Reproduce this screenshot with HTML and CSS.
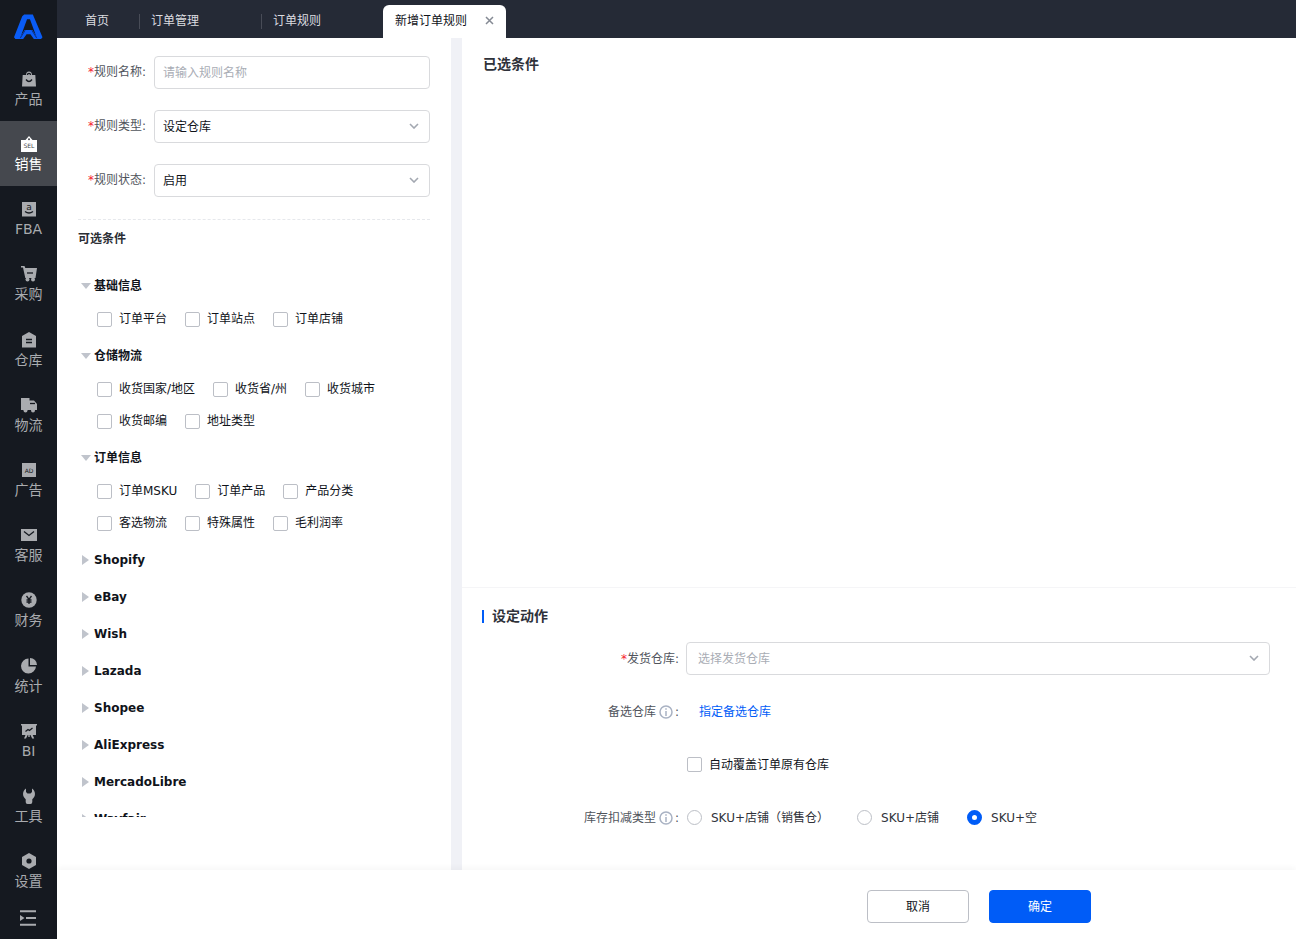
FILE: index.html
```html
<!DOCTYPE html>
<html lang="zh-CN">
<head>
<meta charset="utf-8">
<title>新增订单规则</title>
<link rel="stylesheet" href="styles.css">
</head>
<body>
<div class="app">
  <nav class="sidebar" aria-label="主导航">
    <a class="logo" href="#" aria-label="首页">
      <svg width="30" height="26" viewBox="0 0 30 26"><path d="M10.500 0h9L29.500 23.500 28 25.500h-4L16.500 5h-3L6 25.500H1.500L0 23.500 8.500 2z" fill="#0a5cf5"/><path d="M5 25.500h4.500l3.500-5h4l3.500 5H25l-6-9.500h-8z" fill="#0a5cf5"/><path d="M6.500 24.500L11.500 16.500M23.500 24.500L18.500 16.500" fill="none" stroke="#0b2f83" stroke-width="1"/></svg>
    </a>
    <a class="nav-item" href="#"><svg class="ico" viewBox="0 0 16 16"><path fill="currentColor" d="M5 4a3 3.500 0 0 1 6 0h3.300l.7 11.500H1L1.700 4z"/><path class="cut" d="M6.500 4a1.500 1.700 0 0 1 3 0M5 8.500q3 4 6 0"/></svg>产品</a>
    <a class="nav-item active" href="#" aria-current="page"><svg class="ico" viewBox="0 0 16 16"><path fill="currentColor" d="M0 4h4.500L8 0l3.500 4H16v12H0z"/><circle cx="8" cy="3.200" r="1" class="hole"/><text class="ico-text" x="8" y="12.300">SEL</text></svg>销售</a>
    <a class="nav-item" href="#"><svg class="ico" viewBox="0 0 16 16"><path fill="currentColor" d="M1 1h14v14.500H1z"/><text class="ico-text big" x="8" y="9.300">a</text><path class="cut" d="M4 10.500q4 3 8 0"/></svg>FBA</a>
    <a class="nav-item" href="#"><svg class="ico" viewBox="0 0 16 16"><path fill="currentColor" d="M0 0h3.500l.8 2H16l-1.500 10H4.300L2 1.500H0z"/><circle cx="6.500" cy="13.500" r="2" fill="currentColor"/><circle cx="12" cy="13.500" r="2" fill="currentColor"/><path class="cut" d="M6 7h6"/></svg>采购</a>
    <a class="nav-item" href="#"><svg class="ico" viewBox="0 0 16 16"><path fill="currentColor" d="M8 0l7 4v11.500H1V4z"/><path class="cut" d="M5 7.500h6M5 10.500h6"/></svg>仓库</a>
    <a class="nav-item" href="#"><svg class="ico" viewBox="0 0 16 16"><path fill="currentColor" d="M0 1h8.500v2.500H13L16 7v6H0z"/><path class="cut" d="M9 6.500h5"/><circle cx="4.500" cy="13.500" r="2" fill="currentColor"/><circle cx="12" cy="13.500" r="2" fill="currentColor"/></svg>物流</a>
    <a class="nav-item" href="#"><svg class="ico" viewBox="0 0 16 16"><path fill="currentColor" d="M1 1h14v14H1z"/><text class="ico-text" x="8" y="10.500">AD</text></svg>广告</a>
    <a class="nav-item" href="#"><svg class="ico" viewBox="0 0 16 16"><path fill="currentColor" d="M0 2h16v12H0z"/><path class="cut" d="M3 4.500l5 4 5-4"/></svg>客服</a>
    <a class="nav-item" href="#"><svg class="ico" viewBox="0 0 16 16"><circle cx="8" cy="8" r="7.700" fill="currentColor"/><path class="cut" d="M5.500 4L8 7.500 10.500 4M8 7.500V12M5.500 8h5M5.500 10h5"/></svg>财务</a>
    <a class="nav-item" href="#"><svg class="ico" viewBox="0 0 16 16"><path fill="currentColor" d="M7.500.5v8H15A7.500 7.500 0 1 1 7.500.5z"/><path fill="currentColor" d="M9 0a7 7 0 0 1 7 7H9z"/></svg>统计</a>
    <a class="nav-item" href="#"><svg class="ico" viewBox="0 0 16 16"><path fill="currentColor" d="M0 1h16v1.500h-1V12H1V2.500H0zM4.500 12h2.200L5 15.500H3zM9.500 12h2.200l1.500 3.500h-2zM7.300 12h1.400v2H7.300z"/><path class="cut" d="M4.500 8.500l2.500-2 1.500 1 3-2.500"/></svg>BI</a>
    <a class="nav-item" href="#"><svg class="ico" viewBox="0 0 16 16"><path fill="currentColor" d="M5 .5v3.500l1.500 1.500h3L11 4V.5a6.500 6.500 0 0 1 .3 10.700V14q0 2-1.800 2h-3q-1.800 0-1.800-2v-2.800A6.500 6.500 0 0 1 5 .5z"/></svg>工具</a>
    <a class="nav-item" href="#"><svg class="ico" viewBox="0 0 16 16"><path fill="currentColor" d="M8 0l7 4v8l-7 4-7-4V4z"/><circle class="hole" cx="8" cy="8" r="2.600"/></svg>设置</a>
    <button class="collapse" type="button" aria-label="展开菜单"><svg class="ico" viewBox="0 0 16 16"><path d="M0 1.200h16M6 8h10M0 14.800h16" stroke="currentColor" stroke-width="2"/><path d="M0 5l4.500 3L0 11z" fill="currentColor"/></svg></button>
  </nav>

  <div class="main">
    <header class="tabs">
      <a class="tab home" href="#">首页</a>
      <a class="tab" href="#">订单管理</a>
      <a class="tab" href="#">订单规则</a>
      <div class="tab current"><span>新增订单规则</span><button class="close" type="button" aria-label="关闭"><svg width="9" height="9" viewBox="0 0 9 9"><path d="M1 1l7 7M8 1L1 8" stroke="currentColor" stroke-width="1.500"/></svg></button></div>
    </header>

    <div class="content">
      <section class="rule-panel">
        <div class="fields">
          <div class="field">
            <label for="name"><i>*</i>规则名称:</label>
            <input class="control" id="name" type="text" placeholder="请输入规则名称">
          </div>
          <div class="field">
            <label for="type"><i>*</i>规则类型:</label>
            <div class="select-box"><select class="control" id="type"><option>设定仓库</option></select><svg class="chevron" viewBox="0 0 10 6"><path d="M1 1l4 4 4-4"/></svg></div>
          </div>
          <div class="field">
            <label for="state"><i>*</i>规则状态:</label>
            <div class="select-box"><select class="control" id="state"><option>启用</option></select><svg class="chevron" viewBox="0 0 10 6"><path d="M1 1l4 4 4-4"/></svg></div>
          </div>
        </div>
        <h2 class="sub-title">可选条件</h2>
        <div class="tree">
          <div class="group">
            <button class="group-head open" type="button" aria-expanded="true">基础信息</button>
            <div class="options">
              <label class="check"><input type="checkbox">订单平台</label>
              <label class="check"><input type="checkbox">订单站点</label>
              <label class="check"><input type="checkbox">订单店铺</label>
            </div>
          </div>
          <div class="group">
            <button class="group-head open" type="button" aria-expanded="true">仓储物流</button>
            <div class="options">
              <label class="check"><input type="checkbox">收货国家/地区</label>
              <label class="check"><input type="checkbox">收货省/州</label>
              <label class="check"><input type="checkbox">收货城市</label>
              <label class="check"><input type="checkbox">收货邮编</label>
              <label class="check"><input type="checkbox">地址类型</label>
            </div>
          </div>
          <div class="group">
            <button class="group-head open" type="button" aria-expanded="true">订单信息</button>
            <div class="options">
              <label class="check"><input type="checkbox">订单MSKU</label>
              <label class="check"><input type="checkbox">订单产品</label>
              <label class="check"><input type="checkbox">产品分类</label>
              <label class="check"><input type="checkbox">客选物流</label>
              <label class="check"><input type="checkbox">特殊属性</label>
              <label class="check"><input type="checkbox">毛利润率</label>
            </div>
          </div>
          <div class="group"><button class="group-head" type="button" aria-expanded="false">Shopify</button></div>
          <div class="group"><button class="group-head" type="button" aria-expanded="false">eBay</button></div>
          <div class="group"><button class="group-head" type="button" aria-expanded="false">Wish</button></div>
          <div class="group"><button class="group-head" type="button" aria-expanded="false">Lazada</button></div>
          <div class="group"><button class="group-head" type="button" aria-expanded="false">Shopee</button></div>
          <div class="group"><button class="group-head" type="button" aria-expanded="false">AliExpress</button></div>
          <div class="group"><button class="group-head" type="button" aria-expanded="false">MercadoLibre</button></div>
          <div class="group"><button class="group-head" type="button" aria-expanded="false">Wayfair</button></div>
        </div>
      </section>

      <div class="detail">
        <section class="selected"><h2 class="title">已选条件</h2></section>
        <section class="action">
          <h2 class="title marked">设定动作</h2>
          <div class="action-form">
            <label class="action-label" for="warehouse"><i>*</i>发货仓库:</label>
            <div class="select-box"><select class="control empty" id="warehouse"><option>选择发货仓库</option></select><svg class="chevron" viewBox="0 0 10 6"><path d="M1 1l4 4 4-4"/></svg></div>
            <span class="action-label">备选仓库<svg class="info" viewBox="0 0 14 14"><circle cx="7" cy="7" r="6"/><path d="M7 3.200v1.600M7 6v5"/></svg>:</span>
            <a class="assign" href="#">指定备选仓库</a>
            <label class="check override"><input type="checkbox">自动覆盖订单原有仓库</label>
            <span class="action-label" id="deduct">库存扣减类型<svg class="info" viewBox="0 0 14 14"><circle cx="7" cy="7" r="6"/><path d="M7 3.200v1.600M7 6v5"/></svg>:</span>
            <div class="radios" role="radiogroup" aria-labelledby="deduct">
              <label class="radio"><input type="radio" name="deduct">SKU+店铺（销售仓）</label>
              <label class="radio"><input type="radio" name="deduct">SKU+店铺</label>
              <label class="radio"><input type="radio" name="deduct" checked>SKU+空</label>
            </div>
          </div>
        </section>
      </div>
    </div>

    <footer class="footer">
      <button class="btn" type="button">取消</button>
      <button class="btn primary" type="button">确定</button>
    </footer>
  </div>
</div>
</body>
</html>
```
FILE: styles.css
```css
* { box-sizing: border-box; }

body {
  margin: 0;
  font: 12px/20px "DejaVu Sans", "Noto Sans CJK SC", sans-serif;
  color: #10131a;
  background: #fff;
}

button, input, select { font: inherit; color: inherit; margin: 0; }
button { padding: 0; border: 0; background: none; cursor: pointer; }
a { text-decoration: none; }
h2 { margin: 0; }

.app { display: flex; height: 100vh; overflow: hidden; }

/* Sidebar */
.sidebar {
  flex: 0 0 57px;
  display: flex;
  flex-direction: column;
  background: #151920;
}
.logo { flex: 0 0 56px; padding: 14px 0 0 14px; }
.logo svg { display: block; width: 29px; }
.nav-item {
  --bg: #151920;
  flex: 1 1 0;
  display: flex;
  flex-direction: column;
  align-items: center;
  justify-content: center;
  gap: 2px;
  padding-top: 2px;
  font-size: 14px;
  color: #a9abaf;
  background: var(--bg);
}
.nav-item.active { --bg: #45484e; color: #fff; }
.ico { display: block; width: 16px; height: 16px; }
.cut { fill: none; stroke: var(--bg); stroke-width: 1.3; }
.hole { fill: var(--bg); }
.ico-text {
  fill: var(--bg);
  font: 6px "DejaVu Sans", sans-serif;
  text-anchor: middle;
}
.ico-text.big { font-size: 9px; }
.collapse {
  flex: 0 0 35px;
  display: flex;
  justify-content: center;
  padding: 6px 2px 0 0;
  color: #a9abaf;
}

/* Tabs */
.main { flex: 1; min-width: 0; display: flex; flex-direction: column; }
.tabs {
  flex: 0 0 38px;
  display: flex;
  align-items: flex-end;
  background: #252a36;
}
.tab {
  position: relative;
  display: flex;
  align-items: center;
  width: 122px;
  height: 33px;
  padding: 0 12px 2px;
  color: #dcdde0;
}
.tab.home { width: 82px; padding-left: 28px; }
.tab:not(.current) + .tab:not(.current)::before {
  content: "";
  position: absolute;
  left: 0;
  top: 9px;
  height: 15px;
  border-left: 1px solid #484c57;
}
.tab.current {
  width: 123px;
  justify-content: space-between;
  color: #10131a;
  background: #fff;
  border-radius: 6px 6px 0 0;
}
.close { color: #858a94; }
.close svg { display: block; }

/* Rule panel */
.content { flex: 1; min-height: 0; display: flex; }
.rule-panel {
  flex: 0 0 405px;
  display: flex;
  flex-direction: column;
  min-height: 0;
  padding: 18px 21px 53px;
  border-right: 11px solid #f0f1f6;
}
.fields {
  display: flex;
  flex-direction: column;
  gap: 21px;
  padding-bottom: 22px;
  border-bottom: 1px dashed #e6e8ec;
}
.field { display: flex; }
.field label {
  flex: 0 0 76px;
  padding-right: 8px;
  text-align: right;
  line-height: 32px;
  color: #50545c;
}
label i, .action-label i { color: #f5222d; font-style: normal; }
.control {
  flex: 1;
  width: 100%;
  min-width: 0;
  height: 33px;
  padding: 0 8px;
  border: 1px solid #d9dadd;
  border-radius: 4px;
  background: #fff;
  appearance: none;
}
.control::placeholder { color: #a9adb5; opacity: 1; }
.control.empty { padding: 0 11px; color: #a9adb5; }
.select-box { position: relative; flex: 1; min-width: 0; }
.chevron {
  position: absolute;
  right: 11px;
  top: 13px;
  width: 10px;
  height: 6px;
  fill: none;
  stroke: #a3a8b1;
  stroke-width: 1.6;
  pointer-events: none;
}
.sub-title { margin-top: 9px; font-size: 12px; line-height: 20px; color: #2b2e35; }

.tree { flex: 1; min-height: 0; margin-top: 20px; overflow: hidden; }
.group { padding-bottom: 3px; }
.group-head {
  display: flex;
  align-items: center;
  height: 34px;
  font-weight: bold;
}
.group-head::before {
  content: "";
  width: 7px;
  height: 10px;
  margin: 0 5px 0 4px;
  background: #c0c4cc;
  clip-path: polygon(0 0, 100% 50%, 0 100%);
}
.group-head.open::before {
  width: 10px;
  height: 6px;
  margin: 0 3px;
  clip-path: polygon(0 0, 100% 0, 50% 100%);
}
.options {
  display: flex;
  flex-wrap: wrap;
  column-gap: 18px;
  padding: 0 0 1px 19px;
}
.check { display: flex; align-items: center; gap: 7px; height: 32px; }
.check input, .radio input {
  appearance: none;
  width: 15px;
  height: 15px;
  border: 1px solid #bcbfc6;
  border-radius: 2px;
  background: #fff;
}

/* Right side */
.detail { flex: 1; min-width: 0; display: flex; flex-direction: column; }
.selected { flex: 1; padding: 16px 21px; border-bottom: 1px solid #f5f5f7; }
.title { font-size: 14px; line-height: 20px; color: #2f323a; }
.action { padding: 18px 26px 36px 20px; }
.marked { display: flex; align-items: center; gap: 8px; }
.marked::before { content: ""; width: 2px; height: 13px; background: #005cf7; }
.action-form {
  display: grid;
  grid-template-columns: 204px 1fr;
  grid-auto-rows: 33px;
  align-items: center;
  row-gap: 20px;
  margin-top: 16px;
}
.action-label {
  display: flex;
  align-items: center;
  justify-content: flex-end;
  padding-right: 7px;
  color: #50545c;
}
.info {
  width: 14px;
  height: 14px;
  margin: 0 2px 0 3px;
  fill: none;
  stroke: #a9b2c3;
  stroke-width: 1.5;
}
.assign { padding-left: 13px; color: #005cf7; }
.override { grid-column: 2; padding-left: 1px; }
.radios { display: flex; flex-wrap: wrap; gap: 28px; padding-left: 1px; color: #2f323a; }
.radio { display: flex; align-items: center; gap: 9px; }
.radio input { border-radius: 50%; }
.radio input:checked { border: 5px solid #005cf7; }

/* Footer */
.footer {
  position: relative;
  flex: 0 0 69px;
  display: flex;
  justify-content: flex-end;
  gap: 20px;
  padding: 20px 205px 0 20px;
  background: #fff;
  box-shadow: 0 -2px 6px rgba(0, 0, 0, .04);
}
.btn {
  width: 102px;
  height: 33px;
  border: 1px solid #bcbfc6;
  border-radius: 4px;
}
.btn.primary { border-color: #005cf7; background: #005cf7; color: #fff; }
```
